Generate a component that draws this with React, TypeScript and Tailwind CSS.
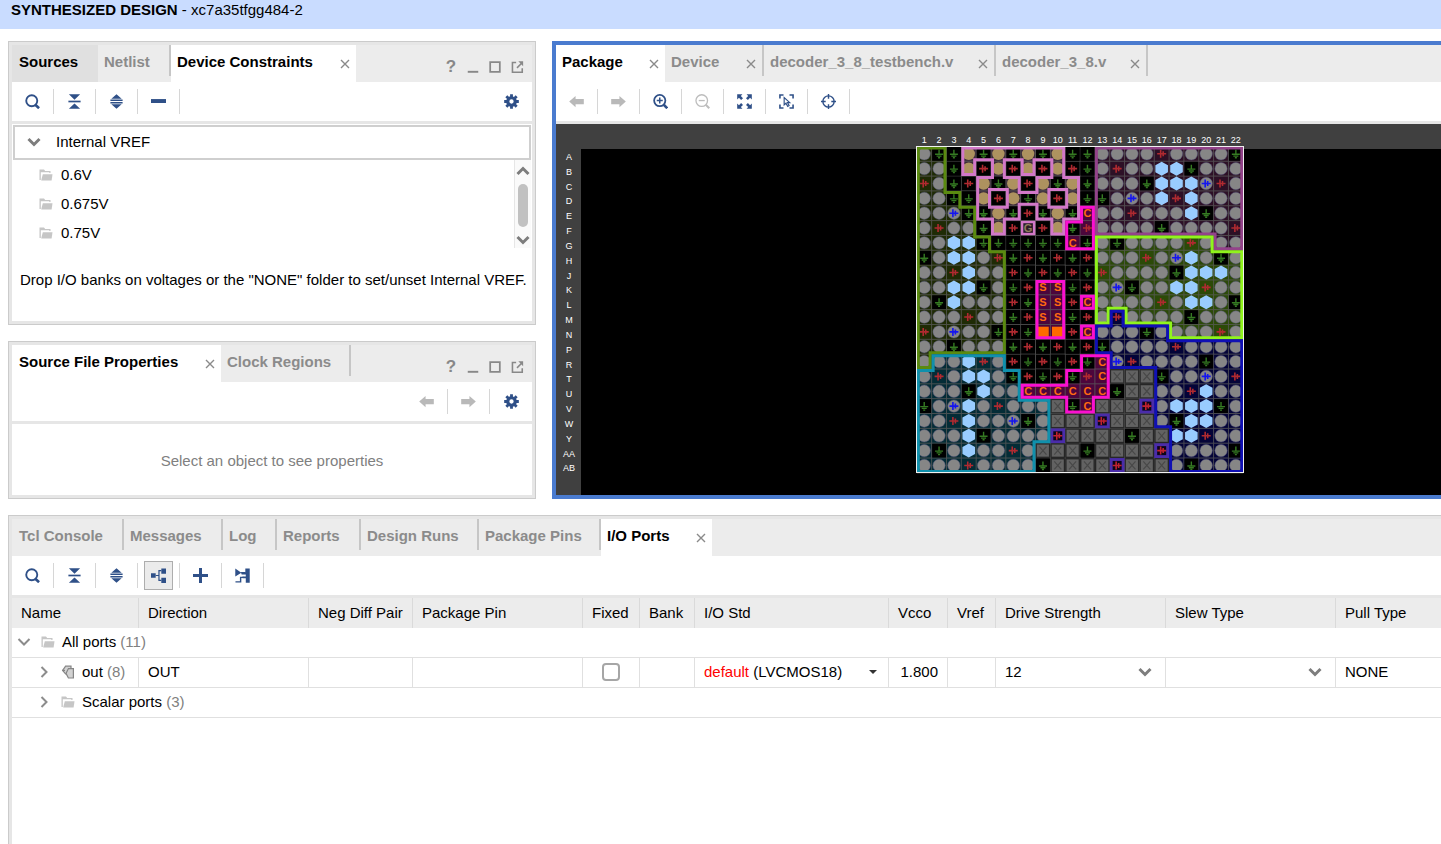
import React from "react";

const NAVY = "#2f5088";

type Point = [number, number];

const COLUMN_LABELS = Array.from({ length: 22 }, (_, i) => String(i + 1));
const ROW_LABELS = "A B C D E F G H J K L M N P R T U V W Y AA AB".split(" ");

// One character per ball:
// o user I/O, g ground, r supply, b clock pin, h hexagonal pin, t transceiver,
// C/S configuration, G reserved, O filled, x unconnected, p boxed supply
const PINS = [
  "oggtgtgtgtggoooorooooog".replace("rooooog", "roooog"),
  "oogtrtrtrtrgoroohhgooo",
  "rogrtgtrtgtgoooghhhbro",
  "ooggtrtgtrtggobohrhooo",
  "oobggtgrgtgCoorooohgoo",
  "oroogtrGrtgroooogoooor",
  "oohhggggggCgogoooorooo",
  "gohhorgrgrgrooorobhogo",
  "oorhoorgrgrgrooooghhho",
  "oohhgogrSSgrobgoohhroo",
  "oghooorgSSrCoooorohhog",
  "oooroogrSSgroroooogooo",
  "roboogrgOOrCooogooooro",
  "oogooogrgrgrgooooroooo",
  "ooohrorgrgrgCbroooogoo",
  "orohhogrgrgrCxxxgoobor",
  "oooghooCCCCCCgxxoorhoo",
  "gobhoroooxgCxxxpohhhgo",
  "oorhoobgoxxxpxxxoghhoo",
  "ooohgoooopxxxxgxxhhroo".replace("oooopxxxx", "oooopxxxx"),
  "ogohooroxxxgxxxxpoooog",
  "oooroooogxxxxpxxxogooo",
];

const CELL = 14.84;
const X0 = 360.8;
const Y0 = 22.4;

interface Region {
  id: string;
  stroke: string;
  fill: string;
  rings: Point[][];
}

const box = (x1: number, y1: number, x2: number, y2: number): Point[] => [
  [x1, y1],
  [x2, y1],
  [x2, y2],
  [x1, y2],
];

const REGIONS: Region[] = [
  {
    id: "olive",
    stroke: "#5a8a10",
    fill: "#1f2b05",
    rings: [[[0, 0], [2, 0], [2, 3], [3, 3], [3, 4], [4, 4], [4, 6], [5, 6], [5, 7], [6, 7], [6, 14], [1, 14], [1, 15], [0, 15]]],
  },
  {
    id: "plum",
    stroke: "#93438a",
    fill: "#2d1026",
    rings: [[[12, 0], [22, 0], [22, 7], [20, 7], [20, 6], [12, 6]]],
  },
  {
    id: "lime",
    stroke: "#90f41c",
    fill: "#2c4a08",
    rings: [[[12, 6], [20, 6], [20, 7], [22, 7], [22, 13], [17, 13], [17, 12], [14, 12], [14, 11], [13, 11], [13, 12], [12, 12]]],
  },
  {
    id: "navy",
    stroke: "#1010b4",
    fill: "#040438",
    rings: [[[13, 11], [14, 11], [14, 12], [17, 12], [17, 13], [22, 13], [22, 22], [17, 22], [17, 19], [16, 19], [16, 15], [13, 15], [13, 14], [12, 14], [12, 12], [13, 12]]],
  },
  {
    id: "teal",
    stroke: "#1090ac",
    fill: "#042c36",
    rings: [[[1, 14], [6, 14], [6, 15], [7, 15], [7, 17], [9, 17], [9, 20], [8, 20], [8, 22], [0, 22], [0, 15], [1, 15]]],
  },
  {
    id: "pink",
    stroke: "#d278c8",
    fill: "#3c2a3a",
    rings: [
      [[3, 0], [10, 0], [10, 2], [11, 2], [11, 5], [10, 5], [10, 6], [9, 6], [9, 5], [8, 5], [8, 4], [7, 4], [7, 5], [6, 5], [6, 6], [5, 6], [5, 5], [4, 5], [4, 2], [3, 2]],
      box(4, 1, 5, 2),
      box(6, 1, 7, 2),
      box(8, 1, 9, 2),
      box(7, 2, 8, 3),
      box(5, 3, 6, 4),
      box(9, 3, 10, 4),
    ],
  },
  {
    id: "magenta",
    stroke: "#fa10d0",
    fill: "#4c063c",
    rings: [
      [[11, 4], [12, 4], [12, 7], [10, 7], [10, 5], [11, 5]],
      box(8, 9, 10, 13),
      box(11, 10, 12, 11),
      box(11, 12, 12, 13),
      [[11, 14], [13, 14], [13, 17], [12, 17], [12, 18], [10, 18], [10, 17], [7, 17], [7, 16], [10, 16], [10, 15], [11, 15]],
    ],
  },
];

const ringPath = (rings: Point[][]) =>
  rings.map((ring) => "M" + ring.map(([x, y]) => `${X0 + x * CELL} ${Y0 + y * CELL}`).join("L") + "Z").join("");

function Supply({ color }: { color: string }) {
  return <path d="M-4.5 0H-1M-1 -4V4M1.5 -2.5V2.5M1.5 0H4.5M-1 0H1.5" stroke={color} strokeWidth="1.6" fill="none" />;
}

function Pin({ kind }: { kind: string }) {
  switch (kind) {
    case "o":
      return <circle r="6.2" fill="#868686" stroke="#55557a" strokeWidth="0.5" />;
    case "b":
      return (
        <>
          <circle r="6.2" fill="#868686" stroke="#55557a" strokeWidth="0.5" />
          <Supply color="#1414f0" />
        </>
      );
    case "t":
      return <circle r="6.2" fill="#ad925f" />;
    case "h":
      return <path d="M0 -7L6.3 -3.5V3.5L0 7L-6.3 3.5V-3.5Z" fill="#99ccff" />;
    case "g":
      return (
        <>
          <rect x="-6.9" y="-6.9" width="13.8" height="13.8" fill="#000" />
          <path d="M0 -4V1M-4 0.5H4M-2.5 2.3H2.5M-1 4H1" stroke="#357a22" strokeWidth="1.4" fill="none" />
        </>
      );
    case "r":
      return <Supply color="#b02a30" />;
    case "p":
      return (
        <>
          <rect x="-7.4" y="-7.4" width="14.8" height="14.8" fill="#4a2caa" />
          <rect x="-4.5" y="-4.5" width="9" height="9" fill="#0c0618" />
          <Supply color="#c02230" />
        </>
      );
    case "x":
      return (
        <>
          <rect x="-7" y="-7" width="14" height="14" fill="#2c2c2c" />
          <rect x="-6" y="-6" width="12" height="12" fill="#626262" />
          <path d="M-3.5 -4L3.5 4M3.5 -4L-3.5 4" stroke="#484848" strokeWidth="1.2" />
        </>
      );
    case "O":
      return <rect x="-5.8" y="-5.2" width="11.6" height="10.4" fill="#ff6a00" />;
    case "G":
      return (
        <>
          <rect x="-6" y="-6" width="12" height="12" fill="#2a1c28" stroke="#d278c8" strokeWidth="2.4" />
          <text y="4" textAnchor="middle" fontSize="11" fontWeight="bold" fill="#8f7d5c">G</text>
        </>
      );
    default:
      return (
        <text y="4" textAnchor="middle" fontSize="11" fontWeight="bold" fill="#ff6a10">{kind}</text>
      );
  }
}

function PackageMap() {
  const size = CELL * 22;
  const lines = Array.from({ length: 23 }, (_, i) => i * CELL);
  return (
    <svg width="700" height="371" viewBox="0 0 700 371" className="block font-['Liberation_Sans',sans-serif]" role="img" aria-label="Package pins">
      <defs>
        {REGIONS.map((r) => (
          <clipPath id={r.id} key={r.id}>
            <path d={ringPath(r.rings)} clipRule="evenodd" />
          </clipPath>
        ))}
      </defs>
      {COLUMN_LABELS.map((label, i) => (
        <text key={label} x={X0 + (i + 0.5) * CELL} y="19" fontSize="9" textAnchor="middle" fill="#fff">{label}</text>
      ))}
      {ROW_LABELS.map((label, i) => (
        <text key={label} x="13" y={Y0 + (i + 0.5) * CELL + 6} fontSize="9" textAnchor="middle" fill="#fff">{label}</text>
      ))}
      <rect x={X0} y={Y0} width={size} height={size} fill="#000" />
      {REGIONS.map((r) => (
        <path key={r.id} d={ringPath(r.rings)} fill={r.fill} fillRule="evenodd" />
      ))}
      <path
        d={lines.map((p) => `M${X0 + p} ${Y0}V${Y0 + size}M${X0} ${Y0 + p}H${X0 + size}`).join("")}
        stroke="#5a5a5a"
        strokeWidth="1"
        opacity="0.8"
      />
      {PINS.map((row, y) =>
        row.split("").map((kind, x) => (
          <g key={`${x}-${y}`} transform={`translate(${X0 + (x + 0.5) * CELL} ${Y0 + (y + 0.5) * CELL})`}>
            <Pin kind={kind} />
          </g>
        )),
      )}
      {REGIONS.map((r) => (
        <path key={r.id} d={ringPath(r.rings)} fill="none" stroke={r.stroke} strokeWidth="6" clipPath={`url(#${r.id})`} />
      ))}
      <rect x="360.5" y="22.5" width="327" height="326" fill="none" stroke="#f0f0f0" strokeWidth="1" />
    </svg>
  );
}

function Icon({ children, color = NAVY, size = 15 }: { children: React.ReactNode; color?: string; size?: number }) {
  return (
    <svg width={size} height={size} viewBox="0 0 16 16" fill="none" stroke={color} strokeWidth="2" className="shrink-0" aria-hidden="true">
      {children}
    </svg>
  );
}

const SearchIcon = () => (
  <Icon>
    <circle cx="7.2" cy="7.2" r="5.9" />
    <path d="M11 11.5L15 15.2" strokeWidth="2.8" />
  </Icon>
);
const CollapseIcon = () => (
  <Icon>
    <path d="M2 0.2H14L8 6ZM2 15.8H14L8 10Z" fill={NAVY} stroke="none" />
    <path d="M1.5 8H14.5" strokeWidth="1.8" />
  </Icon>
);
const ExpandIcon = () => (
  <Icon>
    <path d="M8 0.2L13.5 5H2.5ZM8 15.8L13.5 11H2.5Z" fill={NAVY} stroke="none" />
    <path d="M1.5 6.6H14.5M1.5 9.4H14.5" strokeWidth="1.6" />
  </Icon>
);
const MinusIcon = () => (
  <Icon>
    <path d="M0 7.5H16" strokeWidth="4.2" />
  </Icon>
);
const PlusIcon = () => (
  <Icon>
    <path d="M0 8H16M8 0V16" strokeWidth="3.2" />
  </Icon>
);
const GearIcon = () => (
  <Icon>
    <circle cx="8" cy="8" r="4" strokeWidth="3.4" />
    <path d="M8 0.2V3.5M8 12.5V15.8M0.2 8H3.5M12.5 8H15.8M2.5 2.5L4.8 4.8M11.2 11.2L13.5 13.5M13.5 2.5L11.2 4.8M4.8 11.2L2.5 13.5" strokeWidth="3" />
  </Icon>
);
const BackIcon = () => (
  <Icon color="#b9b9b9">
    <path d="M0.2 8L7 2V5.2H15.8V10.8H7V14Z" fill="#b9b9b9" stroke="none" />
  </Icon>
);
const ForwardIcon = () => (
  <Icon color="#b9b9b9">
    <path d="M15.8 8L9 2V5.2H0.2V10.8H9V14Z" fill="#b9b9b9" stroke="none" />
  </Icon>
);
const ZoomInIcon = () => (
  <Icon>
    <circle cx="7.2" cy="7" r="6" strokeWidth="1.9" />
    <path d="M4 7H10.4M7.2 3.8V10.2" strokeWidth="1.6" />
    <path d="M11.5 11.5L15.2 15.2" strokeWidth="2.8" />
  </Icon>
);
const ZoomOutIcon = () => (
  <Icon color="#bdbdbd">
    <circle cx="7.2" cy="7" r="6.2" strokeWidth="1.4" />
    <path d="M4 7H10.4" strokeWidth="1.4" />
    <path d="M11.5 11.5L15.2 15.2" strokeWidth="2.2" />
  </Icon>
);
const FitIcon = () => (
  <Icon>
    <path d="M0.2 0.2H5.8L4.1 2.1L6.4 4.4L4.4 6.4L2.1 4.1L0.2 5.8ZM15.8 0.2V5.8L13.9 4.1L11.6 6.4L9.6 4.4L11.9 2.1L10.2 0.2ZM0.2 15.8V10.2L2.1 11.9L4.4 9.6L6.4 11.6L4.1 13.9L5.8 15.8ZM15.8 15.8H10.2L11.9 13.9L9.6 11.6L11.6 9.6L13.9 11.9L15.8 10.2Z" fill={NAVY} stroke="none" />
  </Icon>
);
const SelectAreaIcon = () => (
  <Icon>
    <path d="M4.8 1H1V4.8M11.2 1H15V4.8M1 11.2V15H4.8M15 11.2V15H11.2" strokeWidth="1.7" />
    <path d="M5.5 3.8V11.6L7.4 9.8L9.3 13.2L10.8 12.3L9 9.2H11.5Z" strokeWidth="1.2" />
  </Icon>
);
const TargetIcon = () => (
  <Icon>
    <circle cx="8" cy="8" r="6" strokeWidth="1.5" />
    <path d="M8 0V5M8 11V16M0 8H5M11 8H16" strokeWidth="1.5" />
  </Icon>
);
const HierarchyIcon = () => (
  <Icon>
    <path d="M0 5.5H5V10.5H0ZM11 0.5H16V6H11ZM11 10.5H16V16H11Z" fill={NAVY} stroke="none" />
    <path d="M5 8H8.5M11 2.8H8.5V13.2H11" strokeWidth="1.3" />
  </Icon>
);
const InterfaceIcon = () => (
  <Icon>
    <path d="M0.3 0.5L6.8 5L0.3 9ZM11 0.5H15.7V15.7H11.5V11H8V9H11.5V7H7V4.5H11Z" fill={NAVY} stroke="none" />
    <path d="M0.5 14.8H6V10H9M6.5 5H11" strokeWidth="1.5" />
  </Icon>
);

function FolderIcon() {
  return (
    <svg width="14" height="14" viewBox="0 0 14 14" fill="#c6c6c6" className="shrink-0" aria-hidden="true">
      <path d="M0.5 1.5H5L6.2 3H11.5V5H10.3V4.2H1.8V12H0.5Z" />
      <path d="M3.8 6.3H13.5L12.6 12.5H2.2Z" />
    </svg>
  );
}

function BusIcon() {
  return (
    <svg width="14" height="14" viewBox="0 0 14 14" fill="#d2d2d2" stroke="#858585" strokeWidth="1.2" className="shrink-0" aria-hidden="true">
      <path d="M4.6 1.2H10V9H4.6L1.6 5.4Z" />
      <path d="M1 5.4H4" />
      <path d="M7.4 3.6H12.4V13H7.4L5 8.4Z" />
    </svg>
  );
}

function Chevron({ dir, color = "#7d7d7d", width = 3 }: { dir: "down" | "up" | "right"; color?: string; width?: number }) {
  const d = dir === "down" ? "M1.5 4L7 9.5L12.5 4" : dir === "up" ? "M1.5 10L7 4.5L12.5 10" : "M4.5 2L9.5 7L4.5 12";
  return (
    <svg width="14" height="14" viewBox="0 0 14 14" fill="none" stroke={color} strokeWidth={width} className="shrink-0" aria-hidden="true">
      <path d={d} />
    </svg>
  );
}

function Tool({ label, icon, pressed = false, disabled = false, last = false }: { label: string; icon: React.ReactNode; pressed?: boolean; disabled?: boolean; last?: boolean }) {
  return (
    <div className={last ? "flex h-[25px] w-[42px] items-center justify-center" : "flex h-[25px] w-[42px] items-center justify-center border-r border-[#d6d6d6]"}>
      <button
        type="button"
        aria-label={label}
        disabled={disabled}
        className={pressed ? "flex h-[29px] w-[29px] shrink-0 items-center justify-center border border-[#adadad] bg-[#ebebeb]" : "flex h-[29px] w-[29px] shrink-0 items-center justify-center"}
      >
        {icon}
      </button>
    </div>
  );
}

function Toolbar({ children }: { children: React.ReactNode }) {
  return <div className="flex h-[42px] shrink-0 items-center border-b-[3px] border-[#e6e6e6] bg-white">{children}</div>;
}

function CloseButton({ label }: { label: string }) {
  return (
    <button type="button" aria-label={`Close ${label}`} className="mt-1 flex h-4 w-4 items-center justify-center">
      <svg width="10" height="10" viewBox="0 0 10 10" stroke="#8a8a8a" strokeWidth="1.4" aria-hidden="true">
        <path d="M1 1L9 9M9 1L1 9" />
      </svg>
    </button>
  );
}

function Tab({ label, className = "", active = false, hover = false, close = false, divider = false }: { label: string; className?: string; active?: boolean; hover?: boolean; close?: boolean; divider?: boolean }) {
  const tone = active ? "bg-white text-black" : hover ? "bg-[#e0e0e0] text-black" : "text-[#8b8b8b]";
  return (
    <div className={`flex h-[37px] shrink-0 ${tone} ${className}`}>
      <div className={`flex flex-1 justify-between pl-[6px] ${divider ? "h-[31px] border-r-2 border-[#c6c6c6]" : ""}`}>
        <button type="button" role="tab" aria-selected={active} className="h-[34px] font-bold whitespace-nowrap">
          {label}
        </button>
        {close && (
          <span className="flex h-[34px] items-center pr-[3px]">
            <CloseButton label={label} />
          </span>
        )}
      </div>
    </div>
  );
}

function WindowButtons() {
  const cls = "flex h-[22px] w-[22px] items-center justify-center";
  return (
    <div className="ml-auto flex items-center pt-[6px] pr-1">
      <button type="button" aria-label="Help" className={`${cls} text-[17px] font-bold text-[#888]`}>?</button>
      <button type="button" aria-label="Minimize" className={cls}>
        <Icon color="#888" size={14}><path d="M2 13.5H14" strokeWidth="2.2" /></Icon>
      </button>
      <button type="button" aria-label="Maximize" className={cls}>
        <Icon color="#888" size={14}><path d="M2.5 2.5H13.5V13.5H2.5Z" strokeWidth="2" /></Icon>
      </button>
      <button type="button" aria-label="Float" className={cls}>
        <Icon color="#888" size={14}>
          <path d="M7 2.8H2.8V14H14V9.5" strokeWidth="1.8" />
          <path d="M8 9L13 4" strokeWidth="1.8" />
          <path d="M9.5 1.5H15V7Z" fill="#888" stroke="none" />
        </Icon>
      </button>
    </div>
  );
}

const PANEL = "border border-[#cbcbcb] bg-[#e6e6e6] p-[3px]";
const COLUMNS = [
  ["Name", "w-[127px]"],
  ["Direction", "w-[170px]"],
  ["Neg Diff Pair", "w-[104px]"],
  ["Package Pin", "w-[170px]"],
  ["Fixed", "w-[57px]"],
  ["Bank", "w-[55px]"],
  ["I/O Std", "w-[194px]"],
  ["Vcco", "w-[59px]"],
  ["Vref", "w-[48px]"],
  ["Drive Strength", "w-[170px]"],
  ["Slew Type", "w-[170px]"],
  ["Pull Type", ""],
];
const CELL_CLASS = "border-r border-b border-[#e0e0e0] px-[9px] pb-px last:border-r-0";

function PickCell({ label, value }: { label: string; value: string }) {
  return (
    <td className={CELL_CLASS}>
      <div className="grid items-center">
        <select aria-label={label} defaultValue={value} className="col-start-1 row-start-1 w-full appearance-none bg-transparent">
          <option value={value}>{value}</option>
        </select>
        <span className="pointer-events-none col-start-1 row-start-1 mr-1 justify-self-end">
          <Chevron dir="down" />
        </span>
      </div>
    </td>
  );
}

export default function App() {
  return (
    <div className="flex h-screen flex-col overflow-hidden bg-white font-['Liberation_Sans',Arial,sans-serif] text-[15px] leading-5 text-black">
      <header className="h-[29px] shrink-0 bg-[#c9dcff] pl-[11px]">
        <h1 className="leading-5">
          <b>SYNTHESIZED DESIGN</b> - xc7a35tfgg484-2
        </h1>
      </header>

      <main className="flex min-h-0 flex-1 flex-col gap-4 pt-3 pl-2">
        <div className="flex gap-4">
          <div className="flex w-[528px] shrink-0 flex-col gap-4">
            <section className={PANEL}>
              <div className="flex bg-[#ececec]" role="tablist">
                <Tab label="Sources" hover className="w-[86px] pl-px" />
                <Tab label="Netlist" divider className="w-[73px]" />
                <Tab label="Device Constraints" active close className="w-[185px]" />
                <WindowButtons />
              </div>
              <Toolbar>
                <Tool label="Search" icon={<SearchIcon />} />
                <Tool label="Collapse all" icon={<CollapseIcon />} />
                <Tool label="Expand all" icon={<ExpandIcon />} />
                <Tool label="Remove" icon={<MinusIcon />} />
                <div className="ml-auto">
                  <Tool label="Settings" icon={<GearIcon />} last />
                </div>
              </Toolbar>
              <div className="h-[197px] bg-white p-px">
                <button type="button" aria-expanded="true" className="flex h-[35px] w-full items-center gap-[15px] border-2 border-[#cfcfcf] pb-px pl-3 text-left">
                  <Chevron dir="down" />
                  Internal VREF
                </button>
                <div className="flex h-[88px]">
                  <ul className="flex-1">
                    {["0.6V", "0.675V", "0.75V"].map((v) => (
                      <li key={v} className="flex h-[29px] items-center gap-2 pl-[26px]">
                        <FolderIcon />
                        {v}
                      </li>
                    ))}
                  </ul>
                  <div className="flex w-[17px] flex-col items-center justify-between border-l border-[#e6e6e6] bg-[#fafafa] pt-1 pb-px">
                    <Chevron dir="up" />
                    <div className="h-[43px] w-[10px] rounded-full bg-[#c1c1c1]" />
                    <Chevron dir="down" />
                  </div>
                </div>
                <p className="pt-[22px] pl-[7px] whitespace-nowrap">
                  Drop I/O banks on voltages or the "NONE" folder to set/unset Internal VREF.
                </p>
              </div>
            </section>

            <section className={PANEL}>
              <div className="flex bg-[#ececec]" role="tablist">
                <Tab label="Source File Properties" active close className="w-[209px] pl-px" />
                <Tab label="Clock Regions" divider className="w-[130px]" />
                <WindowButtons />
              </div>
              <Toolbar>
                <div className="ml-auto flex">
                  <Tool label="Previous" icon={<BackIcon />} disabled />
                  <Tool label="Next" icon={<ForwardIcon />} disabled />
                  <Tool label="Settings" icon={<GearIcon />} last />
                </div>
              </Toolbar>
              <div className="flex h-[71px] items-center justify-center bg-white pt-[2px] text-[#808080]">
                Select an object to see properties
              </div>
            </section>
          </div>

          <section className="min-w-0 flex-1 overflow-hidden border-4 border-r-0 border-[#4a7bcf]">
            <div className="flex bg-[#ececec]" role="tablist">
              <Tab label="Package" active close className="w-[109px]" />
              <Tab label="Device" close divider className="w-[99px]" />
              <Tab label="decoder_3_8_testbench.v" close divider className="w-[232px]" />
              <Tab label="decoder_3_8.v" close divider className="w-[152px]" />
            </div>
            <Toolbar>
              <Tool label="Previous" icon={<BackIcon />} disabled />
              <Tool label="Next" icon={<ForwardIcon />} disabled />
              <Tool label="Zoom in" icon={<ZoomInIcon />} />
              <Tool label="Zoom out" icon={<ZoomOutIcon />} disabled />
              <Tool label="Zoom fit" icon={<FitIcon />} />
              <Tool label="Select area" icon={<SelectAreaIcon />} />
              <Tool label="Autofit selection" icon={<TargetIcon />} />
            </Toolbar>
            <div className="bg-[#404040] bg-[linear-gradient(#000,#000)] bg-[position:25px_25px] bg-no-repeat">
              <PackageMap />
            </div>
          </section>
        </div>

        <section className="flex min-h-0 flex-1 flex-col overflow-hidden border-t border-l border-[#cbcbcb] bg-[#e6e6e6] pt-[3px] pl-[3px]">
          <div className="flex shrink-0 bg-[#ececec]" role="tablist">
            <Tab label="Tcl Console" divider className="w-[112px] pl-px" />
            <Tab label="Messages" divider className="w-[99px]" />
            <Tab label="Log" divider className="w-[54px]" />
            <Tab label="Reports" divider className="w-[84px]" />
            <Tab label="Design Runs" divider className="w-[118px]" />
            <Tab label="Package Pins" divider className="w-[122px]" />
            <Tab label="I/O Ports" active close className="w-[111px]" />
          </div>
          <Toolbar>
            <Tool label="Search" icon={<SearchIcon />} />
            <Tool label="Collapse all" icon={<CollapseIcon />} />
            <Tool label="Expand all" icon={<ExpandIcon />} />
            <Tool label="Group by interface" icon={<HierarchyIcon />} pressed />
            <Tool label="Add" icon={<PlusIcon />} />
            <Tool label="Create interface" icon={<InterfaceIcon />} />
          </Toolbar>
          <div className="min-h-0 flex-1 overflow-hidden bg-white">
            <table className="w-full table-fixed border-separate border-spacing-0 whitespace-nowrap">
              <thead>
                <tr className="h-[30px] bg-[#ececec] text-left">
                  {COLUMNS.map(([name, width]) => (
                    <th key={name} className={`${width} border-r border-[#dadada] pl-[9px] font-normal last:border-r-0`}>{name}</th>
                  ))}
                </tr>
              </thead>
              <tbody>
                <tr className="h-[30px]">
                  <td colSpan={12} className="border-b border-[#e0e0e0] pb-px pl-[5px]">
                    <div className="flex items-center">
                      <button type="button" aria-label="Collapse all ports" className="mr-[10px]"><Chevron dir="down" color="#8c8c8c" width={2} /></button>
                      <FolderIcon />
                      <span className="ml-[7px]">All ports <span className="text-[#808080]">(11)</span></span>
                    </div>
                  </td>
                </tr>
                <tr className="h-[30px]">
                  <td className="border-r border-b border-[#e0e0e0] pb-px pl-[25px]">
                    <div className="flex items-center">
                      <button type="button" aria-label="Expand out" className="mr-[10px]"><Chevron dir="right" color="#8c8c8c" width={2} /></button>
                      <BusIcon />
                      <span className="ml-[7px]">out <span className="text-[#808080]">(8)</span></span>
                    </div>
                  </td>
                  <td className={CELL_CLASS}>OUT</td>
                  <td className={CELL_CLASS} />
                  <td className={CELL_CLASS} />
                  <td className={CELL_CLASS}>
                    <input type="checkbox" aria-label="Fixed" className="mx-auto block h-[18px] w-[18px] appearance-none rounded-[4px] border-2 border-[#a6a6a6] bg-white" />
                  </td>
                  <td className={CELL_CLASS} />
                  <td className={CELL_CLASS}>
                    <button type="button" aria-haspopup="listbox" className="flex w-full items-center justify-between">
                      <span><span className="text-[#ff0000]">default</span> (LVCMOS18)</span>
                      <svg width="8" height="4" viewBox="0 0 8 4" className="mr-[2px]" aria-hidden="true"><path d="M0 0H8L4 4Z" fill="#333" /></svg>
                    </button>
                  </td>
                  <td className={`${CELL_CLASS} text-right`}>1.800</td>
                  <td className={CELL_CLASS} />
                  <PickCell label="Drive Strength" value="12" />
                  <PickCell label="Slew Type" value="" />
                  <td className={CELL_CLASS}>NONE</td>
                </tr>
                <tr className="h-[30px]">
                  <td colSpan={12} className="border-b border-[#e0e0e0] pb-px pl-[25px]">
                    <div className="flex items-center">
                      <button type="button" aria-label="Expand scalar ports" className="mr-[10px]"><Chevron dir="right" color="#8c8c8c" width={2} /></button>
                      <FolderIcon />
                      <span className="ml-[7px]">Scalar ports <span className="text-[#808080]">(3)</span></span>
                    </div>
                  </td>
                </tr>
              </tbody>
            </table>
          </div>
        </section>
      </main>
    </div>
  );
}
